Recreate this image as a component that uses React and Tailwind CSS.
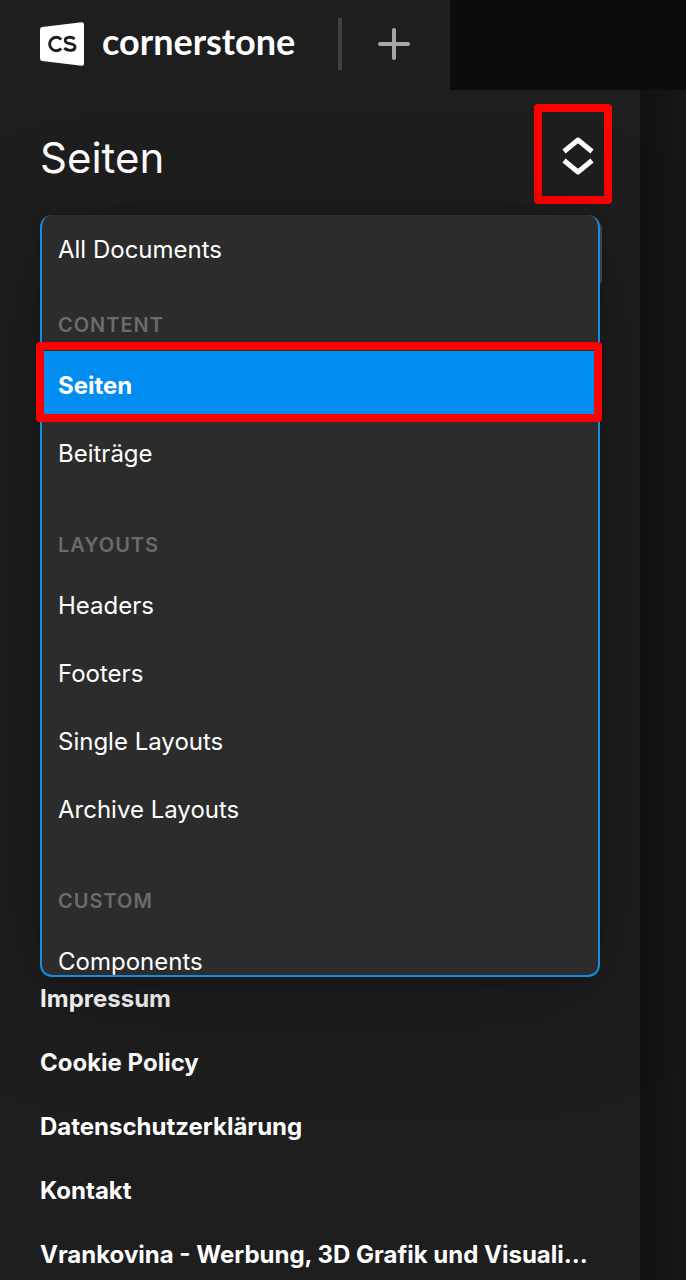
import React from "react";

const groups = [
  { label: "CONTENT", items: ["Seiten", "Beiträge"] },
  { label: "LAYOUTS", items: ["Headers", "Footers", "Single Layouts", "Archive Layouts"] },
  { label: "CUSTOM", items: ["Components"] },
];

const documents = [
  "Impressum",
  "Cookie Policy",
  "Datenschutzerklärung",
  "Kontakt",
  "Vrankovina - Werbung, 3D Grafik und Visuali...",
];

function Logo() {
  return (
    <a href="#" className="flex items-start gap-[18px] text-white">
      <svg width="44" height="44" viewBox="0 0 44 44" aria-hidden="true">
        <path
          d="M2.2 4.9 41.6.3Q44 .1 44 2.6V41.4Q44 43.9 41.6 43.7L2.2 39.1Q0 38.8 0 36.6V7.4Q0 5.2 2.2 4.9Z"
          fill="#fff"
        />
        <path
          d="M21.2 17.4A6.7 6.7 0 1 0 21.2 26.6M34.6 16.9C31.6 14.6 25.2 14.6 25.2 18.4C25.2 23 35 20.4 35 25C35 29.4 27.6 29.2 24.2 26.2"
          fill="none"
          stroke="#1e1e1e"
          strokeWidth="2.9"
        />
      </svg>
      <span className="font-[Lato,sans-serif] text-4xl leading-[38px] font-bold">cornerstone</span>
    </a>
  );
}

function TopBar() {
  return (
    <header className="flex h-[90px] shrink-0 bg-[#0c0c0c]">
      <div className="flex w-[450px] items-start bg-[#1e1e1e] pl-10">
        <div className="w-[298px] pt-[22px]">
          <Logo />
        </div>
        <div className="mt-[18px] h-[52px] w-1 bg-[#404040]" />
        <button type="button" aria-label="New document" className="mt-7 ml-9">
          <svg width="32" height="32" viewBox="0 0 32 32" stroke="#a6a6a6" strokeWidth="4" strokeLinecap="round">
            <path d="M16 2V30M2 16H30" />
          </svg>
        </button>
      </div>
    </header>
  );
}

function MenuItem({ name, selected }) {
  return (
    <button
      type="button"
      role="option"
      aria-selected={selected}
      className={
        selected
          ? "block h-[68px] w-full bg-[#028df2] px-4 pt-px text-left font-bold"
          : "block h-[68px] w-full px-4 pt-px text-left"
      }
    >
      {name}
    </button>
  );
}

function TypeMenu() {
  return (
    <div className="relative z-10">
      <div className="absolute top-[7px] -right-[2px] h-16 w-10 rounded-md bg-[#4a4d50]" />
      <div
        role="listbox"
        aria-label="Document type"
        className="relative h-[762px] overflow-hidden rounded-xl border-2 border-t-0 border-[#188ae0] bg-[#2c2c2c] shadow-[0_4px_16px_rgba(0,0,0,0.18),0_20px_120px_rgba(0,0,0,0.25)]"
      >
        <MenuItem name="All Documents" selected={false} />
        {groups.map((group, index) => (
          <div key={group.label} role="group" aria-label={group.label} className={index ? "mt-4" : ""}>
            <div className="h-[68px] px-4 pt-[30px] text-xl leading-6 font-semibold tracking-wider text-[#6b6b6b]">
              {group.label}
            </div>
            {group.items.map((name) => (
              <MenuItem key={name} name={name} selected={name === "Seiten"} />
            ))}
          </div>
        ))}
      </div>
      <div className="pointer-events-none absolute top-[127px] -right-[2px] -left-1 h-20 rounded-sm border-8 border-[#ff0000]" />
    </div>
  );
}

export default function App() {
  return (
    <div className="flex min-h-screen flex-col overflow-hidden bg-[#1e1e1e] font-[Inter,sans-serif] text-2xl text-white">
      <TopBar />
      <div className="flex flex-1">
        <main className="min-w-0 flex-1 px-10">
          <div className="flex h-[125px] items-start justify-between">
            <h1 className="pt-11 text-[42px] leading-[48px]">Seiten</h1>
            <div className="relative mt-[45px] h-[42px] w-11">
              <button type="button" aria-label="Toggle document types" className="block">
                <svg width="44" height="42" viewBox="0 0 44 42" fill="none" stroke="#fff" strokeWidth="5" strokeLinejoin="round">
                  <path d="M8 16.5 22 5 36 16.5M8 25.5 22 37 36 25.5" />
                </svg>
              </button>
              <div className="pointer-events-none absolute -top-[31px] -right-3 h-[100px] w-[78px] rounded-sm border-8 border-[#ff0000]" />
            </div>
          </div>
          <TypeMenu />
          <ul className="-mt-[10px] h-[313px]">
            {documents.map((name) => (
              <li key={name} className="h-16 leading-[64px] font-bold whitespace-nowrap">
                <a href="#" className="block">
                  {name}
                </a>
              </li>
            ))}
          </ul>
        </main>
        <aside className="w-[46px] bg-linear-to-r from-[#111111] to-[#161616]" />
      </div>
    </div>
  );
}
